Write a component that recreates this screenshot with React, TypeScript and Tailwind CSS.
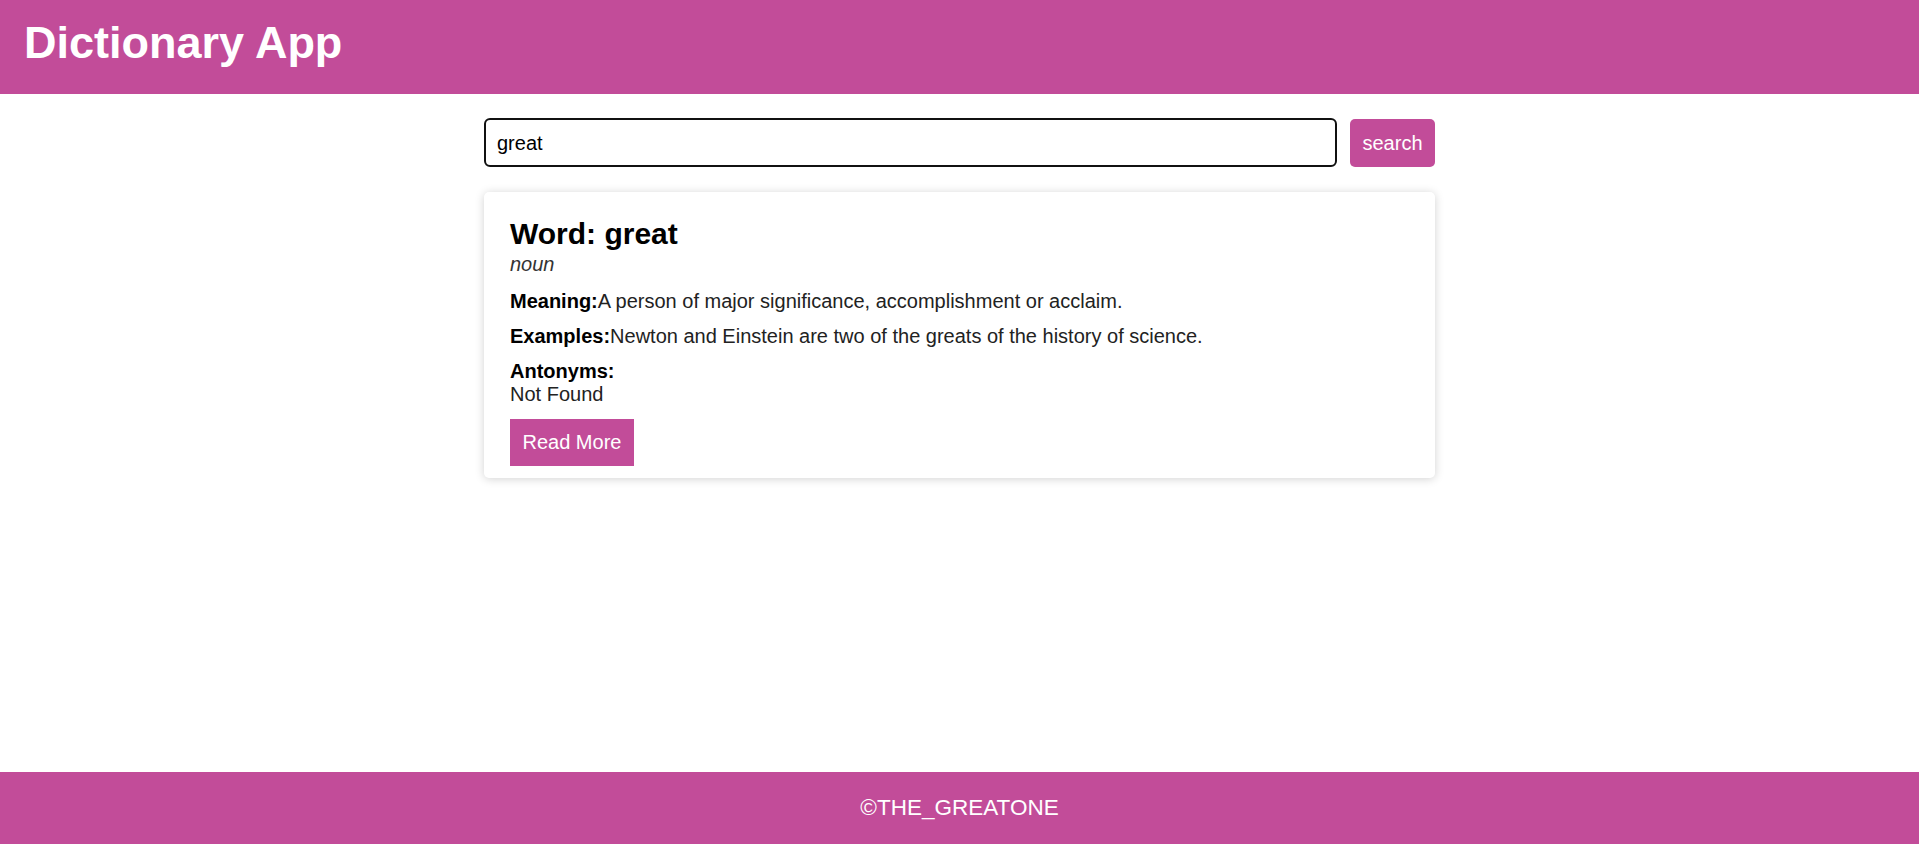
export default function App() {
  return (
    <div className="min-h-screen flex flex-col bg-white font-['Liberation_Sans',Arial,sans-serif]">
      <header className="h-[94px] bg-[#c24c99] pl-[24px] pt-[17px]">
        <h1 className="text-[45px] leading-[51px] font-bold text-white">Dictionary App</h1>
      </header>
      <main className="flex-1">
        <div className="w-[951px] mx-auto mt-[24px]">
          <div className="flex gap-[13px]">
            <input
              className="flex-1 h-[49px] border-2 border-[#111] rounded-[6px] px-[11px] pt-[1px] text-[20px] text-black outline-none"
              defaultValue="great"
            />
            <button className="w-[85px] h-[48px] mt-[1px] bg-[#c24c99] text-white text-[20px] rounded-[5px]">search</button>
          </div>
          <div className="mt-[25px] bg-white rounded-[5px] shadow-[0_1px_10px_rgba(0,0,0,0.18)] pt-[25px] pb-[12px] px-[26px]">
            <h2 className="text-[30px] leading-[34.5px] font-bold text-black">Word: great</h2>
            <p className="mt-[1px] text-[20px] leading-[23px] italic text-[#333]">noun</p>
            <p className="mt-[14px] text-[20px] leading-[23px] text-[#222]">
              <b className="text-black">Meaning:</b>A person of major significance, accomplishment or acclaim.
            </p>
            <p className="mt-[12px] text-[20px] leading-[23px] text-[#222]">
              <b className="text-black">Examples:</b>Newton and Einstein are two of the greats of the history of science.
            </p>
            <div className="mt-[12px] text-[20px] leading-[23px]">
              <b className="block text-black">Antonyms:</b>
              <span className="block text-[#222]">Not Found</span>
            </div>
            <button className="mt-[13px] h-[47px] px-[12.5px] bg-[#c24c99] text-white text-[20px] leading-[23px]">Read More</button>
          </div>
        </div>
      </main>
      <footer className="h-[72px] bg-[#c24c99] flex items-center justify-center text-white text-[22.5px]">
        ©THE_GREATONE
      </footer>
    </div>
  );
}
